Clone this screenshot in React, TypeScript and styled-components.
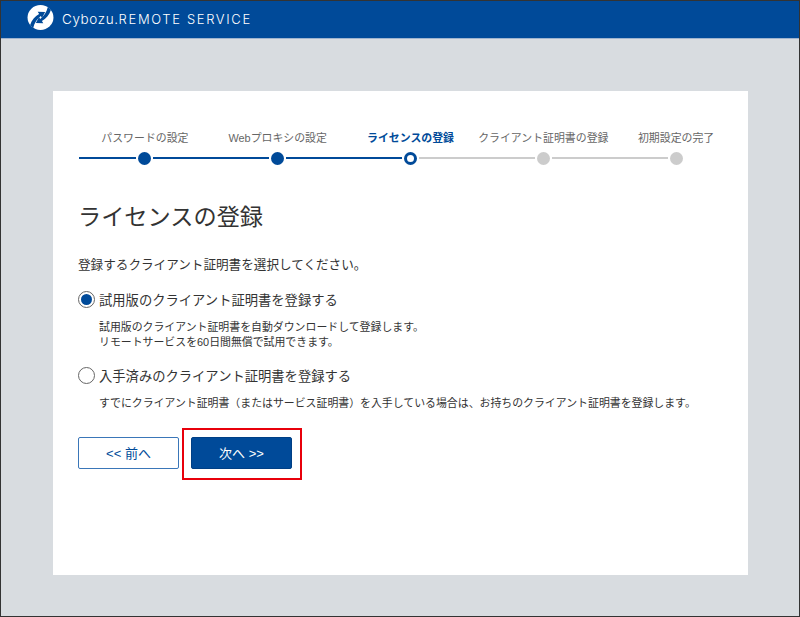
import React, { FC } from 'react'
import styled, { createGlobalStyle } from 'styled-components'

const GlobalStyle = createGlobalStyle`
  html, body {
    margin: 0;
    padding: 0;
    background: #d8dce0;
  }
  body {
    font-family: "Liberation Sans", "Noto Sans CJK JP", sans-serif;
    color: #333;
  }
`

const Page = styled.div`
  width: 800px;
  height: 617px;
  box-sizing: border-box;
  border: 1px solid #333;
  background: #d8dce0;
  overflow: hidden;
`

const Header = styled.header`
  height: 38px;
  box-sizing: border-box;
  background: #004a99;
  display: flex;
  align-items: center;
  padding: 0 0 4px 26px;
  gap: 8px;
  border-bottom: 1px solid #9fb4cf;
`

const Brand = styled.div`
  margin-top: 1px;
  font-family: Inter, "Liberation Sans", sans-serif;
  font-weight: 300;
  color: #fff;
  white-space: nowrap;
`

const BrandName = styled.span`
  font-size: 13.5px;
  letter-spacing: 0.6px;
`

const BrandService = styled.span`
  font-size: 13px;
  letter-spacing: 1.65px;
`

const Card = styled.main`
  width: 695px;
  height: 484px;
  margin: 52px 0 0 52px;
  background: #fff;
  box-sizing: border-box;
  padding: 40px 0 0 25px;
`

const Stepper = styled.ol`
  display: grid;
  grid-template-columns: repeat(5, 132.8px);
  list-style: none;
  margin: 0;
  padding: 0 0 0 0.5px;
`

const Step = styled.li`
  display: flex;
  flex-direction: column;
  align-items: stretch;
`

const StepLabel = styled.span<{ $current?: boolean }>`
  height: 20px;
  line-height: 14px;
  font-size: 10.9px;
  text-align: center;
  white-space: nowrap;
  color: ${(p) => (p.$current ? '#004a99' : '#666')};
  font-weight: ${(p) => (p.$current ? 700 : 400)};
`

const Track = styled.div`
  display: flex;
  align-items: center;
  gap: 2px;
  height: 14px;
`

const Line = styled.span<{ $on?: boolean; $hidden?: boolean }>`
  flex: 1;
  height: 2px;
  background: ${(p) => (p.$hidden ? 'transparent' : p.$on ? '#004a99' : '#ccc')};
`

const Dot = styled.span<{ $state: 'done' | 'current' | 'todo' }>`
  width: 13px;
  height: 13px;
  box-sizing: border-box;
  border-radius: 50%;
  flex: none;
  background: ${(p) => (p.$state === 'done' ? '#004a99' : p.$state === 'current' ? '#fff' : '#ccc')};
  border: ${(p) => (p.$state === 'current' ? '3.5px solid #004a99' : 'none')};
`

const Title = styled.h1`
  margin: 37px 0 0;
  font-size: 23.2px;
  line-height: 30px;
  font-weight: 400;
  color: #333;
`

const Lead = styled.p`
  margin: 23px 0 0;
  font-size: 12.6px;
  line-height: 20px;
  color: #333;
`

const Option = styled.section<{ $gap: number }>`
  margin-top: ${(p) => p.$gap}px;
`

const OptionLabel = styled.label`
  display: flex;
  align-items: center;
  gap: 4px;
  height: 20px;
  font-size: 13.3px;
  color: #333;
`

const Radio = styled.span<{ $checked?: boolean }>`
  width: 17px;
  height: 17px;
  box-sizing: border-box;
  border-radius: 50%;
  flex: none;
  border: 1px solid #666;
  background: #fff;
  display: flex;
  align-items: center;
  justify-content: center;
  &::after {
    content: '';
    width: 11px;
    height: 11px;
    border-radius: 50%;
    background: ${(p) => (p.$checked ? '#004a99' : 'transparent')};
  }
`

const Help = styled.p`
  margin: 11px 0 0 21px;
  font-size: 10.9px;
  line-height: 15px;
  color: #333;
  white-space: nowrap;
`

const Actions = styled.div`
  display: flex;
  align-items: center;
  gap: 12px;
  margin-top: 26px;
`

const Button = styled.button<{ $primary?: boolean }>`
  width: 101px;
  height: 32px;
  box-sizing: border-box;
  border-radius: 2px;
  font-family: inherit;
  font-size: 13px;
  padding: 0 0 2px;
  border: 1px solid ${(p) => (p.$primary ? '#003f85' : '#3a76b8')};
  background: ${(p) => (p.$primary ? '#004a99' : '#fff')};
  color: ${(p) => (p.$primary ? '#fff' : '#004a99')};
`

// red callout drawn over the button, it does not take part in the layout
const Highlighted = styled.div`
  position: relative;
  display: flex;
  &::after {
    content: '';
    position: absolute;
    top: -9px;
    left: -9px;
    right: -10px;
    bottom: -11px;
    border: 2px solid #e8000b;
    pointer-events: none;
  }
`

const Logo: FC = () => (
  <svg width="27" height="25" viewBox="0 0 28 27" aria-hidden="true">
    <ellipse cx="14" cy="13.5" rx="14" ry="13.5" fill="#fff" />
    <path fill="#004a99" d="M2.8 21.5C4.5 16 8 12 12.5 9.6L11 7.4 19 7.6 15.6 14 14.4 11.8C10.5 14.5 7.5 19 6 25Z" />
    <path fill="#004a99" d="M25.2 5.5C23.5 11 20 15 15.5 17.4L17 19.6 9 19.4 12.4 13 13.6 15.2C17.5 12.5 20.5 8 22 2Z" />
  </svg>
)

const steps = [
  { label: 'パスワードの設定', state: 'done' },
  { label: 'Webプロキシの設定', state: 'done' },
  { label: 'ライセンスの登録', state: 'current' },
  { label: 'クライアント証明書の登録', state: 'todo' },
  { label: '初期設定の完了', state: 'todo' },
] as const

const App: FC = () => (
  <Page>
    <GlobalStyle />
    <Header>
      <Logo />
      <Brand>
        <BrandName>Cybozu.</BrandName>
        <BrandService>REMOTE SERVICE</BrandService>
      </Brand>
    </Header>
    <Card>
      <Stepper>
        {steps.map((s, i) => (
          <Step key={s.label}>
            <StepLabel $current={s.state === 'current'}>{s.label}</StepLabel>
            <Track>
              <Line $on={s.state !== 'todo'} />
              <Dot $state={s.state} />
              <Line $on={s.state === 'done'} $hidden={i === steps.length - 1} />
            </Track>
          </Step>
        ))}
      </Stepper>
      <Title>ライセンスの登録</Title>
      <Lead>登録するクライアント証明書を選択してください。</Lead>
      <Option $gap={14}>
        <OptionLabel>
          <Radio $checked />
          試用版のクライアント証明書を登録する
        </OptionLabel>
        <Help>
          試用版のクライアント証明書を自動ダウンロードして登録します。
          <br />
          リモートサービスを60日間無償で試用できます。
        </Help>
      </Option>
      <Option $gap={15}>
        <OptionLabel>
          <Radio />
          入手済みのクライアント証明書を登録する
        </OptionLabel>
        <Help>すでにクライアント証明書（またはサービス証明書）を入手している場合は、お持ちのクライアント証明書を登録します。</Help>
      </Option>
      <Actions>
        <Button>{'<< 前へ'}</Button>
        <Highlighted>
          <Button $primary>{'次へ >>'}</Button>
        </Highlighted>
      </Actions>
    </Card>
  </Page>
)

export default App
